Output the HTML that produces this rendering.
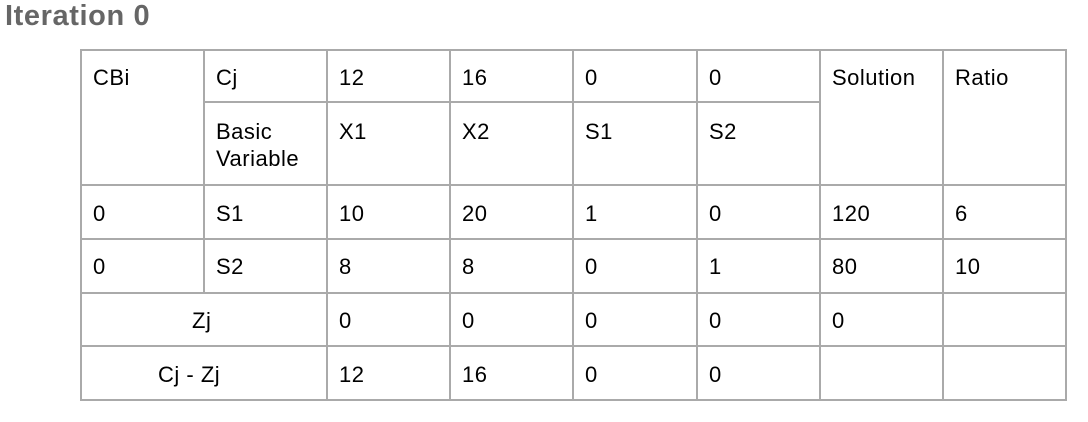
<!DOCTYPE html>
<html><head><style>
body{margin:0;width:1088px;height:422px;background:#fff;position:relative;overflow:hidden;font-family:"Liberation Sans",sans-serif;}
.t{position:absolute;left:5px;top:0px;font-size:29px;font-weight:bold;color:#666;letter-spacing:0.6px}
.h,.v{position:absolute;background:#aaa}
.h{height:2px}.v{width:2px}
.x{position:absolute;font-size:22px;color:#000;line-height:27px;white-space:nowrap;letter-spacing:0.5px}
</style></head><body>
<div class="t">Iteration 0</div>
<div class="h" style="left:80px;top:49px;width:987px"></div>
<div class="h" style="left:203px;top:101px;width:617px"></div>
<div class="h" style="left:80px;top:184px;width:987px"></div>
<div class="h" style="left:80px;top:238px;width:987px"></div>
<div class="h" style="left:80px;top:292px;width:987px"></div>
<div class="h" style="left:80px;top:345px;width:987px"></div>
<div class="h" style="left:80px;top:399px;width:987px"></div>
<div class="v" style="left:80px;top:49px;height:352px"></div>
<div class="v" style="left:203px;top:49px;height:244px"></div>
<div class="v" style="left:326px;top:49px;height:352px"></div>
<div class="v" style="left:449px;top:49px;height:352px"></div>
<div class="v" style="left:572px;top:49px;height:352px"></div>
<div class="v" style="left:696px;top:49px;height:352px"></div>
<div class="v" style="left:819px;top:49px;height:352px"></div>
<div class="v" style="left:942px;top:49px;height:352px"></div>
<div class="v" style="left:1065px;top:49px;height:352px"></div>
<div class="x" style="left:93px;top:64px">CBi</div>
<div class="x" style="left:216px;top:64px">Cj</div>
<div class="x" style="left:339px;top:64px">12</div>
<div class="x" style="left:462px;top:64px">16</div>
<div class="x" style="left:585px;top:64px">0</div>
<div class="x" style="left:709px;top:64px">0</div>
<div class="x" style="left:832px;top:64px">Solution</div>
<div class="x" style="left:955px;top:64px">Ratio</div>
<div class="x" style="left:216px;top:118px">Basic<br>Variable</div>
<div class="x" style="left:339px;top:118px">X1</div>
<div class="x" style="left:462px;top:118px">X2</div>
<div class="x" style="left:585px;top:118px">S1</div>
<div class="x" style="left:709px;top:118px">S2</div>
<div class="x" style="left:93px;top:200px">0</div>
<div class="x" style="left:216px;top:200px">S1</div>
<div class="x" style="left:339px;top:200px">10</div>
<div class="x" style="left:462px;top:200px">20</div>
<div class="x" style="left:585px;top:200px">1</div>
<div class="x" style="left:709px;top:200px">0</div>
<div class="x" style="left:832px;top:200px">120</div>
<div class="x" style="left:955px;top:200px">6</div>
<div class="x" style="left:93px;top:253px">0</div>
<div class="x" style="left:216px;top:253px">S2</div>
<div class="x" style="left:339px;top:253px">8</div>
<div class="x" style="left:462px;top:253px">8</div>
<div class="x" style="left:585px;top:253px">0</div>
<div class="x" style="left:709px;top:253px">1</div>
<div class="x" style="left:832px;top:253px">80</div>
<div class="x" style="left:955px;top:253px">10</div>
<div class="x" style="left:192px;top:307px">Zj</div>
<div class="x" style="left:339px;top:307px">0</div>
<div class="x" style="left:462px;top:307px">0</div>
<div class="x" style="left:585px;top:307px">0</div>
<div class="x" style="left:709px;top:307px">0</div>
<div class="x" style="left:832px;top:307px">0</div>
<div class="x" style="left:158px;top:361px">Cj - Zj</div>
<div class="x" style="left:339px;top:361px">12</div>
<div class="x" style="left:462px;top:361px">16</div>
<div class="x" style="left:585px;top:361px">0</div>
<div class="x" style="left:709px;top:361px">0</div>
</body></html>
